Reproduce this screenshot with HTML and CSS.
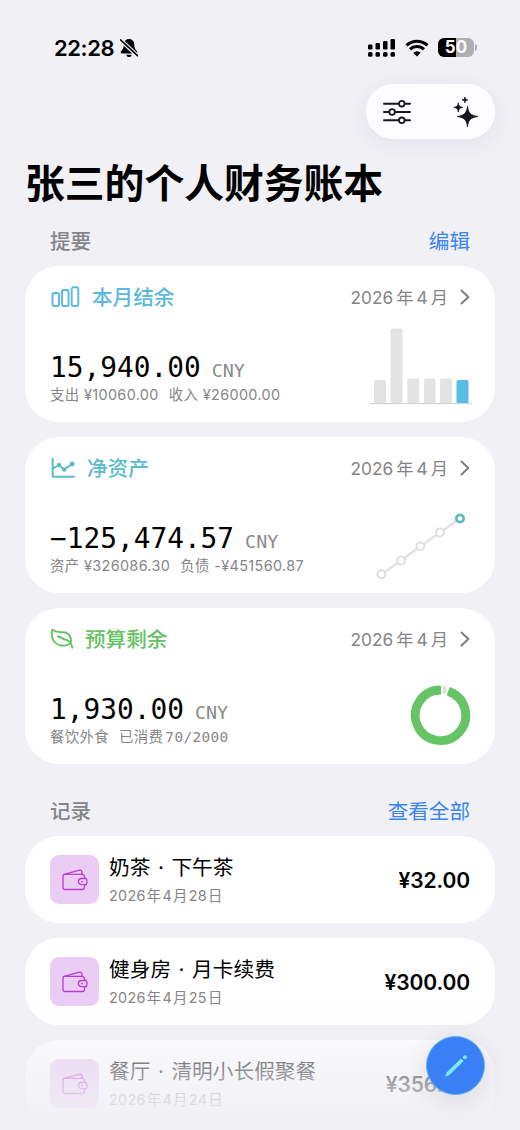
FILE: index.html
```html
<!DOCTYPE html>
<html lang="zh-CN">
<head>
<meta charset="utf-8">
<title>张三的个人财务账本</title>
<link rel="stylesheet" href="styles.css">
</head>
<body>
<svg class="defs" width="0" height="0" aria-hidden="true">
  <symbol id="chevron" viewBox="0 0 10 16"><path d="M1.500 1.500 8.300 8l-6.800 6.500" fill="none" stroke="currentColor" stroke-width="1.900" stroke-linecap="round" stroke-linejoin="round"/></symbol>
  <symbol id="wallet" viewBox="0 0 26 22"><g fill="none" stroke="currentColor" stroke-width="1.300" stroke-linejoin="round" stroke-linecap="round"><path d="M22.800 9 22.200 6.800C22 5.700 21.500 5.300 20.400 5.300H3C1.700 5.300 1 6 1 7.300v11.200c0 1.300.7 2 2 2h17.500c1 0 1.600-.5 1.800-1.500l.5-3"/><path d="M2 5.300 17.500 1.200c1.200-.3 1.900.2 2.200 1.200l.5 2.800"/><path d="M24 9.500h-4.500a3.100 3.100 0 0 0 0 6.200H24c.6-.5 1-1.500 1-3.100s-.4-2.600-1-3.100Z"/></g><circle cx="20" cy="12.600" r=".9" fill="currentColor"/></symbol>
</svg>
<div class="phone">
  <header class="status">
    <div class="clock">22:28</div>
    <svg class="bell" width="18" height="20" viewBox="0 0 18 20"><path d="M9 1C6.300 1 4.300 2.800 3.900 5.400L3.500 9c-.2 2-1.700 3-2.600 4.500-.5 1 0 2 1 2h14.200c1 0 1.500-1 1-2C16.200 12 14.700 11 14.500 9l-.4-3.600C13.700 2.800 11.700 1 9 1Z"/><path d="M6.300 16.700h5.400c-.3 1.500-1.400 2.300-2.700 2.300s-2.400-.8-2.700-2.300Z"/><path d="M.3 1.800 17.500 17.800" stroke="#f1f0f5" stroke-width="4"/><path d="M.5 1.800 17.500 17.600" stroke="#000" stroke-width="1.600" stroke-linecap="round"/></svg>
    <div class="signals">
      <svg width="28" height="20" viewBox="0 0 28 20"><rect x="0" y="6.500" width="4.500" height="5" rx="1.200"/><rect x="7.500" y="5" width="4.500" height="6.500" rx="1.200"/><rect x="15" y="3" width="4.500" height="8.500" rx="1.200"/><rect x="22.500" y="1" width="4.500" height="10.500" rx="1.200"/><rect x="0" y="14" width="4.500" height="4.800" rx="1.500"/><rect x="7.500" y="14" width="4.500" height="4.800" rx="1.500"/><rect x="15" y="14" width="4.500" height="4.800" rx="1.500"/><rect x="22.500" y="14" width="4.500" height="4.800" rx="1.500"/></svg>
      <svg width="24" height="18" viewBox="0 0 24 18"><path d="M1.500 6.400a15.200 15.200 0 0 1 21 0M5.100 10.300a10 10 0 0 1 13.800 0" fill="none" stroke="#000" stroke-width="3"/><path d="M12 17.500 8.300 13.800a5.300 5.300 0 0 1 7.400 0Z"/></svg>
      <div class="battery"><div class="battery-body">50</div><div class="battery-tip"></div></div>
    </div>
  </header>
  <nav class="toolbar">
    <svg width="28" height="24" viewBox="0 0 28 24" fill="none" stroke="#17171f" stroke-width="2" stroke-linecap="round"><path d="M1 3.700h14.600M22 3.700h5M1 12h5M12.200 12H27M1 20.300h14.600M22 20.300h5"/><g stroke-width="1.800"><circle cx="18.800" cy="3.700" r="2.800"/><circle cx="9.100" cy="12" r="2.800"/><circle cx="18.800" cy="20.300" r="2.800"/></g></svg>
    <svg width="26" height="32" viewBox="0 0 26 32" fill="#17171f" stroke="#17171f" stroke-linejoin="round" stroke-width=".8"><path d="M14.500 10.300c.9 6.600 2.900 9 10.300 10.200C17.400 21.700 15.400 24 14.500 30.800c-.9-6.800-2.900-9.100-10.300-10.300C11.600 19.300 13.600 16.900 14.500 10.300Z"/><path d="M5.300 6.800c.4 3.200 1.300 4.100 4.400 4.600-3.100.5-4 1.400-4.400 4.600-.4-3.200-1.300-4.100-4.400-4.600 3.100-.5 4-1.400 4.400-4.600Z"/><path d="M11.900 1c.3 2 .9 2.600 2.900 2.900-2 .3-2.600.9-2.900 2.900-.3-2-.9-2.600-2.900-2.900 2-.3 2.600-.9 2.900-2.900Z"/></svg>
  </nav>
  <h1 class="title">张三的个人财务账本</h1>

  <div class="section-head"><span class="section-name">提要</span><span class="link">编辑</span></div>
  <section class="summary">
    <article class="card">
      <div class="card-head blue">
        <svg class="head-icon bars-icon" width="30" height="22" viewBox="0 0 30 22" fill="none" stroke="currentColor" stroke-width="1.900"><rect x="2.500" y="7" width="6.600" height="13" rx="1.800"/><rect x="12" y="4" width="6.600" height="16" rx="1.800"/><rect x="21.700" y="1.300" width="6.600" height="18.700" rx="1.800"/></svg>
        <h2>本月结余</h2>
        <span class="period">2026<i>年</i>4<i>月</i></span><svg class="chev" width="10" height="16"><use href="#chevron"/></svg>
      </div>
      <div class="card-body">
        <div><div class="amount">15,940.00<small>CNY</small></div><div class="detail"><span>支出 ¥10060.00</span><span>收入 ¥26000.00</span></div></div>
        <svg class="chart" width="102" height="82" viewBox="0 0 102 82"><g fill="#e3e3e4"><rect x="4" y="54" width="12" height="24" rx="2"/><rect x="20.500" y="2.500" width="12" height="75.500" rx="2"/><rect x="37.300" y="52.500" width="12" height="25.500" rx="2"/><rect x="54" y="52.500" width="11.500" height="25.500" rx="2"/><rect x="70" y="52.500" width="12" height="25.500" rx="2"/></g><rect x="86.500" y="54" width="12" height="24" rx="2" fill="#58bce3"/><path d="M0 77.600h102" stroke="#d6d6d8" stroke-width="1.200"/></svg>
      </div>
    </article>
    <article class="card">
      <div class="card-head teal">
        <svg class="head-icon line-icon" width="25" height="22" viewBox="0 0 25 22" fill="none" stroke="currentColor" stroke-width="2" stroke-linejoin="round"><path d="M2.700 1v18.800h22M3 11.500 9 8l5 4.500 8-5.500"/><g fill="currentColor" stroke="none"><circle cx="9" cy="8" r="2.200"/><circle cx="14.300" cy="12.600" r="2.200"/><circle cx="22.200" cy="7" r="2.400"/></g></svg>
        <h2>净资产</h2>
        <span class="period">2026<i>年</i>4<i>月</i></span><svg class="chev" width="10" height="16"><use href="#chevron"/></svg>
      </div>
      <div class="card-body">
        <div><div class="amount">−125,474.57<small>CNY</small></div><div class="detail"><span>资产 ¥326086.30</span><span>负债 -¥451560.87</span></div></div>
        <svg class="chart" width="102" height="82" viewBox="0 0 102 82"><path d="M11.500 77.200 31 63.500 50.300 49.300 70 35.500 90 21.500" stroke="#e2e2e3" stroke-width="2.500" fill="none"/><g fill="#fff" stroke="#dedee0" stroke-width="2"><circle cx="11.500" cy="77.200" r="3.900"/><circle cx="31" cy="63.500" r="3.900"/><circle cx="50.300" cy="49.300" r="3.900"/><circle cx="70" cy="35.500" r="3.900"/><circle cx="90" cy="21.500" r="3.700" stroke="#5bbcc9" stroke-width="2.700"/></g></svg>
      </div>
    </article>
    <article class="card">
      <div class="card-head green">
        <svg class="head-icon leaf-icon" width="25" height="22" viewBox="0 0 25 22" fill="none" stroke="currentColor" stroke-width="1.900" stroke-linecap="round" stroke-linejoin="round"><path d="M2.500 1.700C5 4.300 9 4 13 4.200c5.700.3 8.500 4 7.900 10.300-2 2.500-5.400 3.500-9.400 3C5.500 16.700 1.800 12.200 1.700 5.700 1.600 3.800 1.800 2.500 2.500 1.700Z"/><path d="M8 8.500c3 .2 4.500 2.500 7 3 3.500.6 6.800 3.800 7.300 8.200"/></svg>
        <h2>预算剩余</h2>
        <span class="period">2026<i>年</i>4<i>月</i></span><svg class="chev" width="10" height="16"><use href="#chevron"/></svg>
      </div>
      <div class="card-body">
        <div><div class="amount">1,930.00<small>CNY</small></div><div class="detail"><span>餐饮外食</span><span>已消费<b>70/2000</b></span></div></div>
        <svg class="chart" width="102" height="82" viewBox="0 0 102 82"><g transform="translate(1.500 -1.600)"><path d="M79 22.500A28.200 28.200 0 1 1 68 20.700L68.300 26.700A22.300 22.300 0 1 0 77 28.200Z" fill="#67c466" stroke="#67c466" stroke-width="3" stroke-linejoin="round"/><path d="m73.300 20.800-.5 5" stroke="#dedee1" stroke-width="3.400" stroke-linecap="round"/></g></svg>
      </div>
    </article>
  </section>

  <div class="section-head records-head"><span class="section-name">记录</span><span class="link">查看全部</span></div>
  <section class="records">
    <article class="record"><div class="tile"><svg width="26" height="22"><use href="#wallet"/></svg></div><div class="record-text"><h3>奶茶<i>·</i>下午茶</h3><p>2026<i>年</i>4<i>月</i>28<i>日</i></p></div><strong>¥32.00</strong></article>
    <article class="record"><div class="tile"><svg width="26" height="22"><use href="#wallet"/></svg></div><div class="record-text"><h3>健身房<i>·</i>月卡续费</h3><p>2026<i>年</i>4<i>月</i>25<i>日</i></p></div><strong>¥300.00</strong></article>
    <article class="record"><div class="tile"><svg width="26" height="22"><use href="#wallet"/></svg></div><div class="record-text"><h3>餐厅<i>·</i>清明小长假聚餐</h3><p>2026<i>年</i>4<i>月</i>24<i>日</i></p></div><strong>¥356.00</strong></article>
  </section>
  <div class="fade"></div>
  <button class="compose" aria-label="记一笔"><svg width="26" height="26" viewBox="0 0 26 26" fill="#7fe9fb"><path d="M18 5.400 20.600 8 6.400 21.900 2.900 23.500Q2 23.800 2.300 22.900L3.900 19.300Z"/><circle cx="21.900" cy="4.200" r="2"/></svg></button>
</div>
</body>
</html>
```

FILE: styles.css
```css
* { box-sizing: border-box; }
body { margin: 0; background: #f1f0f5; font-family: Inter, "Noto Sans CJK SC", sans-serif; color: #000; }
h1, h2, h3, p { margin: 0; }
i { font-style: normal; }
svg { display: block; flex: none; }
.defs { position: absolute; }
.phone { position: relative; width: 520px; height: 1130px; overflow: hidden; padding: 0 25px; }

.status { display: flex; align-items: center; height: 84px; padding: 11px 18px 0 29px; }
.clock { font-size: 22px; font-weight: 600; letter-spacing: -.4px; }
.bell { margin-left: 6px; }
.signals { display: flex; align-items: center; gap: 9px; margin-left: auto; }
.battery { display: flex; align-items: center; gap: 1px; }
.battery-body { width: 36px; height: 19px; border-radius: 6px; background: linear-gradient(90deg, #000 50%, #aeaeb2 50%); color: #fff; font-size: 17px; font-weight: 700; line-height: 19px; text-align: center; }
.battery-tip { width: 2px; height: 7px; border-radius: 0 2px 2px 0; background: #aeaeb2; }

.toolbar { display: flex; justify-content: space-between; align-items: center; width: 129px; height: 55px; margin-left: auto; padding: 1px 16px 0 17px; border-radius: 27px; background: #fdfdff; box-shadow: 0 5px 22px rgba(40, 40, 65, .07); }
.title { margin-top: 16px; height: 56px; padding-top: 1px; line-height: 56px; font-size: 39.800px; font-weight: 700; white-space: nowrap; }

.section-head { display: flex; justify-content: space-between; align-items: center; height: 30px; margin-top: 16px; padding: 0 25px; font-size: 20.600px; line-height: 30px; }
.section-name { color: #858589; font-weight: 500; }
.link { color: #3b86ee; }
.summary { display: flex; flex-direction: column; gap: 15.500px; margin-top: 9px; }
.card { height: 155.500px; padding: 16px 25px 0; border-radius: 34px; background: #fff; }
.card-head { display: flex; align-items: center; height: 30px; }
.card-head h2 { padding-top: 2px; font-size: 20.600px; line-height: 30px; font-weight: 500; }
.bars-icon { margin-right: 12px; }
.line-icon { margin-right: 12px; }
.leaf-icon { margin-right: 10px; }
.blue { color: #5ab9de; }
.teal { color: #5bbcc9; }
.green { color: #64c263; }
.period { margin-left: auto; padding-bottom: 2px; color: #858585; font-size: 17.300px; white-space: nowrap; }
.period i { margin: 0 3px; }
.chev { margin-left: 9px; color: #7d7d7f; }
.card-body { display: flex; justify-content: space-between; }
.amount { height: 34px; margin-top: 38px; padding-top: 1px; font: 27.800px/34px "DejaVu Sans Mono", monospace; white-space: nowrap; }
.amount small { margin-left: 11px; color: #8a8a8a; font-size: 18.400px; }
.detail { display: flex; gap: 10px; height: 21px; line-height: 21px; color: #868686; font-size: 14.400px; letter-spacing: .37px; white-space: nowrap; }
.detail b { margin-left: 2px; font: 14.400px "DejaVu Sans Mono", monospace; }
.chart { margin: 14px -2px 0 0; }

.records-head { margin-top: 33px; padding-top: 1px; }
.records { display: flex; flex-direction: column; gap: 15.500px; margin-top: 9.500px; }
.record { display: flex; align-items: center; height: 86.500px; flex: none; padding: 0 25px; border-radius: 34px; background: #fff; }
.tile { display: flex; align-items: center; justify-content: center; width: 49px; height: 49px; padding-top: 1px; border-radius: 9px; background: #eaccf4; color: #b73dd0; }
.record-text { margin-left: 10px; padding-top: 1px; white-space: nowrap; }
.record h3 { font-size: 20.700px; line-height: 30px; font-weight: 400; }
.record h3 i { display: inline-block; width: 21px; text-align: center; }
.record p { margin-top: 2px; line-height: 22px; font-size: 14.400px; color: #858585; letter-spacing: .3px; }
.record p i { margin: 0 1px; }
.record strong { margin-left: auto; padding-top: 2px; font-size: 21px; font-weight: 600; letter-spacing: -.1px; }
.fade { position: absolute; left: 0; right: 0; bottom: 0; height: 130px; background: linear-gradient(rgba(240, 239, 244, 0) 0%, rgba(240, 239, 244, .08) 20%, rgba(240, 239, 244, .4) 35%, rgba(240, 239, 244, .63) 58%, rgba(240, 239, 244, .85) 82%, #f0eff4 100%); }
.compose { position: absolute; left: 426px; top: 1036px; width: 59px; height: 59px; display: flex; align-items: center; justify-content: center; padding: 0; border: 1px solid #53b4fc; border-radius: 50%; background: #3880f3; box-shadow: 0 5px 24px rgba(40, 40, 65, .13); }
```
